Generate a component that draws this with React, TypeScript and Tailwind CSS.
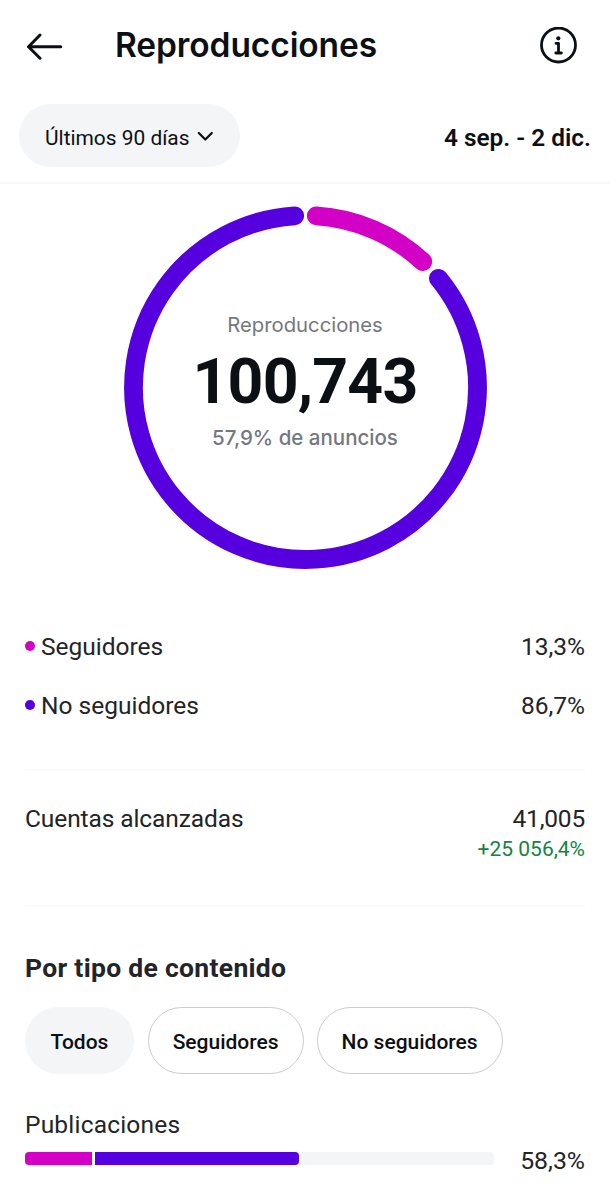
import { useState } from "react";

const PINK = "#d300c5";
const PURPLE = "#5600e0";

const legend = [
    { label: "Seguidores", value: "13,3%", dot: "bg-[#d300c5]" },
    { label: "No seguidores", value: "86,7%", dot: "bg-[#5600e0]" },
];

const filters = [
    { label: "Todos", width: "w-[109px]" },
    { label: "Seguidores", width: "w-[156px]" },
    { label: "No seguidores", width: "w-[186px]" },
];

// angles in degrees, clockwise from the top
function arcPath(from: number, to: number) {
    const c = 181.5;
    const r = 172;
    const point = (deg: number) => {
        const a = (deg * Math.PI) / 180;
        return `${(c + r * Math.sin(a)).toFixed(2)} ${(c - r * Math.cos(a)).toFixed(2)}`;
    };
    return `M${point(from)} A${r} ${r} 0 ${to - from > 180 ? 1 : 0} 1 ${point(to)}`;
}

function Header() {
    return (
        <header className="flex h-[92px] items-center pl-[26px] pr-[33px] text-[#0c1014]">
            <button type="button" aria-label="Atrás">
                <svg width="37" height="28" viewBox="0 0 37 28" fill="none" stroke="currentColor" strokeWidth="3" strokeLinecap="round" strokeLinejoin="round">
                    <path d="M34.7 14.7H2.5M14 3 2.5 14.7 14 26.2" />
                </svg>
            </button>
            <h1 className="ml-[52px] pb-[2px] font-['Inter',sans-serif] text-[33.5px] leading-[40px] font-semibold tracking-[-0.1px] whitespace-nowrap">Reproducciones</h1>
            <button type="button" aria-label="Información" className="ml-auto">
                <svg width="38" height="38" viewBox="0 0 38 38" fill="none" stroke="currentColor" strokeLinecap="round" strokeLinejoin="round">
                    <circle cx="19.5" cy="18" r="17" strokeWidth="2.8" />
                    <path d="M17 16.3h2.5v9.4M16.8 26h5.6" strokeWidth="2.8" />
                    <circle cx="19.3" cy="11.3" r="2.1" fill="currentColor" stroke="none" />
                </svg>
            </button>
        </header>
    );
}

function Ring() {
    return (
        <div className="grid place-items-center">
            <svg className="col-start-1 row-start-1" width="363" height="363" viewBox="0 0 363 363" fill="none" strokeWidth="18.8" strokeLinecap="round">
                <path d={arcPath(3.6, 43)} stroke={PINK} />
                <path d={arcPath(50.6, 356.4)} stroke={PURPLE} />
            </svg>
            <div className="col-start-1 row-start-1 flex flex-col items-center pb-[12px] font-['Inter',sans-serif] whitespace-nowrap">
                <p className="text-[20.3px] leading-[28px] text-[#737880]">Reproducciones</p>
                <p className="mt-[8px] font-['Roboto',sans-serif] text-[62.5px] leading-[70px] font-bold tracking-[-0.8px] text-[#0c1014]">100,743</p>
                <p className="mt-[7px] text-[20.5px] leading-[28px] font-medium text-[#737880]">57,9% de anuncios</p>
            </div>
        </div>
    );
}

export default function App() {
    const [filter, setFilter] = useState("Todos");

    return (
        <div className="h-[1200px] w-[610px] overflow-hidden bg-white font-['Roboto',sans-serif] text-[#222428]">
            <Header />

            {/* periodo */}
            <div className="flex h-[92px] items-start justify-between border-b-2 border-[#f7f8f9] pt-[12px] pr-[19px] pl-[19px] text-[#0c1014]">
                <button type="button" className="flex h-[63px] w-[221px] items-center rounded-full bg-[#f3f5f7] pt-[7px] pl-[26px] text-[20.9px] whitespace-nowrap">
                    Últimos 90 días
                    <svg className="mb-[7px] ml-[7px]" width="17" height="12" viewBox="0 0 17 12" fill="none" stroke="currentColor" strokeWidth="2.2" strokeLinecap="round" strokeLinejoin="round">
                        <path d="m1.8 3 6.5 6.5L14.8 3" />
                    </svg>
                </button>
                <span className="pt-[19px] text-[24.4px] leading-[30px] font-semibold whitespace-nowrap">4 sep. - 2 dic.</span>
            </div>

            <section className="pt-[22px]">
                <Ring />
            </section>

            <main className="px-[25px]">
                <ul className="mt-[48px] flex h-[154px] flex-col border-b-2 border-[#fafafa]">
                    {legend.map((item) => (
                        <li key={item.label} className="flex h-[59px] items-center pt-[2px] text-[24.5px]">
                            <span className={`mr-[6px] mb-[4px] size-[10px] rounded-full ${item.dot}`} />
                            {item.label}
                            <span className="ml-auto">{item.value}</span>
                        </li>
                    ))}
                </ul>

                <div className="flex h-[136px] justify-between border-b-2 border-[#fafafa] pt-[32px] text-[24.5px] leading-[32px]">
                    <span className="tracking-[-0.1px]">Cuentas alcanzadas</span>
                    <div className="text-right">
                        <p className="tracking-[-0.2px]">41,005</p>
                        <p className="text-[21px] leading-[29px] text-[#138343]">+25 056,4%</p>
                    </div>
                </div>

                <h2 className="mt-[44px] text-[26.5px] leading-[34px] font-bold tracking-[0.3px]">Por tipo de contenido</h2>
                <div className="mt-[22px] flex gap-[13px]">
                    {filters.map(({ label, width }) => (
                        <button
                            key={label}
                            type="button"
                            onClick={() => setFilter(label)}
                            className={`h-[67px] rounded-full pt-[4px] text-[21px] font-medium whitespace-nowrap text-[#0c1014] ${width} ${
                                filter === label ? "mr-[0.6px] bg-[#f3f5f7]" : "border border-[#cbccce]"
                            }`}
                        >
                            {label}
                        </button>
                    ))}
                </div>

                <p className="mt-[34px] text-[24.5px] leading-[34px] tracking-[0.2px]">Publicaciones</p>
                <div className="flex h-[38px] items-center justify-between">
                    <div className="mb-[5px] flex h-[13px] w-[469px] overflow-hidden rounded-[4px] bg-[#f3f5f7]">
                        <div className="w-[67px] bg-[#d300c5]" />
                        <div className="w-[3px] bg-white" />
                        <div className="w-[204px] rounded-r-[4px] bg-[#5600e0]" />
                    </div>
                    <span className="text-[24.8px]">58,3%</span>
                </div>
            </main>
        </div>
    );
}
